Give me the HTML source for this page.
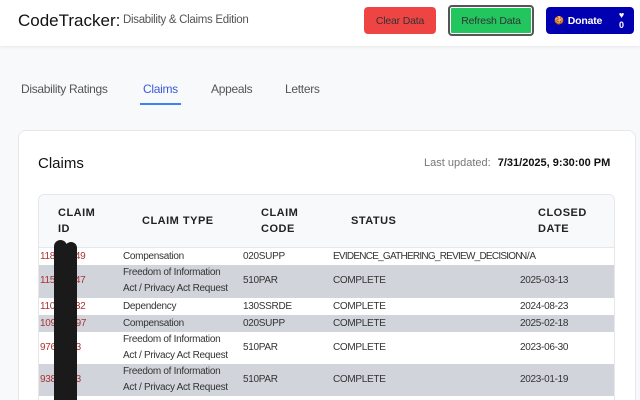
<!DOCTYPE html>
<html><head><meta charset="utf-8"><style>
*{margin:0;padding:0;box-sizing:border-box}
html,body{width:640px;height:400px;overflow:hidden}
body{background:#f8f9fb;font-family:"Liberation Sans",sans-serif;position:relative;color:#222}
.hdr{position:absolute;left:0;top:0;width:640px;height:46px;background:#fff;box-shadow:0 1px 3px rgba(0,0,0,.08)}
.a{position:absolute;white-space:nowrap}
.btn{position:absolute;border-radius:4px;font-size:10.5px;display:flex;align-items:center;justify-content:center;letter-spacing:-.2px}
.card{position:absolute;left:18px;top:130px;width:618px;height:270px;background:#fff;border:1px solid #e5e7eb;border-bottom:none;border-radius:8px 8px 0 0}
.tbl{position:absolute;left:38px;top:194px;width:577px;height:206px;border:1px solid #e5e7eb;border-bottom:none;border-radius:6px 6px 0 0;overflow:hidden;background:#fff}
.th{position:absolute;font-weight:bold;font-size:11px;letter-spacing:.5px;line-height:16px;color:#222}
.row{position:absolute;left:0;width:577px;font-size:10px;color:#333;letter-spacing:-.3px}
.row span{position:absolute;line-height:16px;white-space:nowrap}
.g{background:#d1d5db}
.id{color:#a33}
</style></head><body>
<div class="hdr"></div>
<div class="a" style="left:18px;top:11px;font-size:17px;color:#111">CodeTracker:</div>
<div class="a" style="left:123px;top:14px;font-size:11.5px;color:#555;letter-spacing:-.3px">Disability &amp; Claims Edition</div>
<div class="btn" style="left:364px;top:7px;width:72px;height:27px;background:#ef4444;color:#333">Clear Data</div>
<div class="btn" style="left:448px;top:5px;width:86px;height:31px;background:#22c55e;color:#333;border:2px solid #555;box-shadow:inset 0 0 0 1px #fff">Refresh Data</div>
<div class="btn" style="left:546px;top:7px;width:88px;height:27px;background:#0000b0;color:#fff;font-weight:bold;justify-content:flex-start;padding-left:8px"><span style="font-size:8px;margin-right:4px">🍪</span>Donate<span style="position:absolute;right:10px;top:3px;font-size:9px;text-align:center;line-height:10px">♥<br>0</span></div>
<div class="a" style="left:21px;top:82px;font-size:12px;color:#555;letter-spacing:-.3px">Disability Ratings</div>
<div class="a" style="left:143px;top:82px;font-size:12px;color:#3b5bdb;letter-spacing:-.3px">Claims</div>
<div style="position:absolute;left:140px;top:103px;width:41px;height:2px;background:#3b82f6"></div>
<div class="a" style="left:211px;top:82px;font-size:12px;color:#555;letter-spacing:-.3px">Appeals</div>
<div class="a" style="left:285px;top:82px;font-size:12px;color:#555;letter-spacing:-.3px">Letters</div>
<div class="card"></div>
<div class="a" style="left:38px;top:155px;font-size:15px;color:#111">Claims</div>
<div class="a" style="left:424px;top:157px;font-size:11px;color:#777">Last updated: <b style="color:#111;margin-left:4px">7/31/2025, 9:30:00 PM</b></div>
<div class="tbl">
<div style="position:absolute;left:0;top:0;width:577px;height:53px;background:#f8f9fa;border-bottom:1px solid #e5e7eb"></div>
<div class="th" style="left:19px;top:10px">CLAIM<br>ID</div>
<div class="th" style="left:103px;top:18px">CLAIM TYPE</div>
<div class="th" style="left:222px;top:10px">CLAIM<br>CODE</div>
<div class="th" style="left:312px;top:18px">STATUS</div>
<div class="th" style="left:499px;top:10px">CLOSED<br>DATE</div>
<div class="row" style="top:53px;height:17px"><span class="id" style="left:1px;top:1px">118&nbsp;&nbsp;&nbsp;&nbsp;&nbsp;&nbsp;&nbsp;&nbsp;49</span><span style="left:84px;top:1px">Compensation</span><span style="left:204px;top:1px">020SUPP</span><span style="left:294px;top:1px;letter-spacing:-.75px">EVIDENCE_GATHERING_REVIEW_DECISION</span><span style="left:481px;top:1px">N/A</span></div>
<div class="row g" style="top:70px;height:33px"><span class="id" style="left:1px;top:8px">115&nbsp;&nbsp;&nbsp;&nbsp;&nbsp;&nbsp;&nbsp;&nbsp;47</span><span style="left:84px;top:0">Freedom of Information<br>Act / Privacy Act Request</span><span style="left:204px;top:8px">510PAR</span><span style="left:294px;top:8px">COMPLETE</span><span style="left:481px;top:8px">2025-03-13</span></div>
<div class="row" style="top:103px;height:17px"><span class="id" style="left:1px;top:1px">110&nbsp;&nbsp;&nbsp;&nbsp;&nbsp;&nbsp;&nbsp;&nbsp;32</span><span style="left:84px;top:1px">Dependency</span><span style="left:204px;top:1px">130SSRDE</span><span style="left:294px;top:1px">COMPLETE</span><span style="left:481px;top:1px">2024-08-23</span></div>
<div class="row g" style="top:120px;height:17px"><span class="id" style="left:1px;top:1px">109&nbsp;&nbsp;&nbsp;&nbsp;&nbsp;&nbsp;&nbsp;&nbsp;97</span><span style="left:84px;top:1px">Compensation</span><span style="left:204px;top:1px">020SUPP</span><span style="left:294px;top:1px">COMPLETE</span><span style="left:481px;top:1px">2025-02-18</span></div>
<div class="row" style="top:137px;height:32px"><span class="id" style="left:1px;top:8px">976&nbsp;&nbsp;&nbsp;&nbsp;&nbsp;&nbsp;&nbsp;&nbsp;3</span><span style="left:84px;top:0">Freedom of Information<br>Act / Privacy Act Request</span><span style="left:204px;top:8px">510PAR</span><span style="left:294px;top:8px">COMPLETE</span><span style="left:481px;top:8px">2023-06-30</span></div>
<div class="row g" style="top:169px;height:32px"><span class="id" style="left:1px;top:8px">938&nbsp;&nbsp;&nbsp;&nbsp;&nbsp;&nbsp;&nbsp;&nbsp;3</span><span style="left:84px;top:0">Freedom of Information<br>Act / Privacy Act Request</span><span style="left:204px;top:8px">510PAR</span><span style="left:294px;top:8px">COMPLETE</span><span style="left:481px;top:8px">2023-01-19</span></div>
</div>
<div style="position:absolute;left:54px;top:240px;width:13px;height:160px;background:#1a1a1a;border-radius:7px 7px 0 0"></div>
<div style="position:absolute;left:65px;top:242px;width:12px;height:158px;background:#1a1a1a;border-radius:6px 6px 0 0"></div>
</body></html>
